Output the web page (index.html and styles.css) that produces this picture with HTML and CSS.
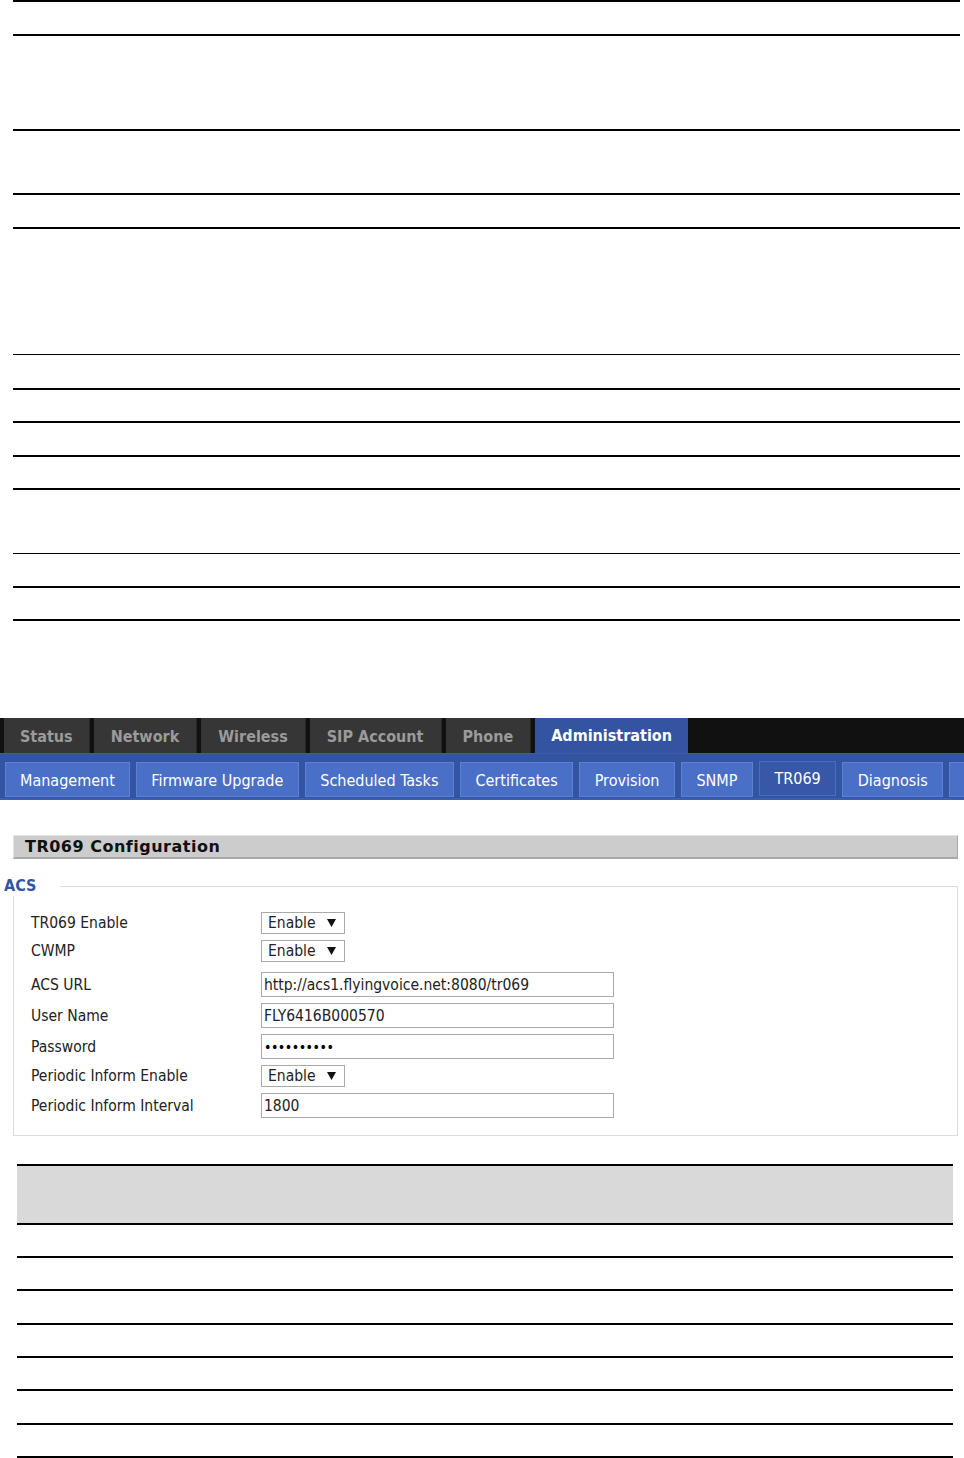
FILE: index.html
```html
<!DOCTYPE html>
<html lang="en">
<head>
    <meta charset="UTF-8">
    <title>TR069 Configuration</title>
    <link rel="stylesheet" href="styles.css">
</head>
<body>
    <!-- 文档表格（上） -->
    <div class="doc-table top">
        <div class="row first h32"></div>
        <div class="row h93"></div>
        <div class="row h62"></div>
        <div class="row h32"></div>
        <div class="row h125 thin"></div>
        <div class="row h33"></div>
        <div class="row h31"></div>
        <div class="row h32"></div>
        <div class="row h31"></div>
        <div class="row h63 thin"></div>
        <div class="row h32"></div>
        <div class="row h31"></div>
    </div>

    <!-- 设备界面截图 -->
    <div class="shot">
        <div class="nav">
            <div class="nav-tab">Status</div>
            <div class="nav-tab">Network</div>
            <div class="nav-tab">Wireless</div>
            <div class="nav-tab">SIP Account</div>
            <div class="nav-tab">Phone</div>
            <div class="nav-tab active">Administration</div>
        </div>
        <div class="subnav">
            <div class="sub-tab">Management</div>
            <div class="sub-tab">Firmware Upgrade</div>
            <div class="sub-tab">Scheduled Tasks</div>
            <div class="sub-tab">Certificates</div>
            <div class="sub-tab">Provision</div>
            <div class="sub-tab">SNMP</div>
            <div class="sub-tab active">TR069</div>
            <div class="sub-tab">Diagnosis</div>
            <div class="sub-tab more"></div>
        </div>

        <div class="panel-title">TR069 Configuration</div>

        <fieldset class="group">
            <legend>ACS</legend>
            <div class="form-row">
                <label>TR069 Enable</label>
                <span class="select">Enable<svg class="caret" width="9" height="8" viewBox="0 0 9 8"><polygon points="0,0 9,0 4.5,8"/></svg></span>
            </div>
            <div class="form-row">
                <label>CWMP</label>
                <span class="select">Enable<svg class="caret" width="9" height="8" viewBox="0 0 9 8"><polygon points="0,0 9,0 4.5,8"/></svg></span>
            </div>
            <div class="form-row tall gap">
                <label>ACS URL</label>
                <input type="text" value="http://acs1.flyingvoice.net:8080/tr069">
            </div>
            <div class="form-row tall">
                <label>User Name</label>
                <input type="text" value="FLY6416B000570">
            </div>
            <div class="form-row tall">
                <label>Password</label>
                <input type="password" value="acspasswrd">
            </div>
            <div class="form-row">
                <label>Periodic Inform Enable</label>
                <span class="select">Enable<svg class="caret" width="9" height="8" viewBox="0 0 9 8"><polygon points="0,0 9,0 4.5,8"/></svg></span>
            </div>
            <div class="form-row tall">
                <label>Periodic Inform Interval</label>
                <input type="text" value="1800">
            </div>
        </fieldset>
    </div>

    <!-- 文档表格（下） -->
    <div class="doc-table bottom">
        <div class="row first head"></div>
        <div class="row h31"></div>
        <div class="row h31"></div>
        <div class="row h32"></div>
        <div class="row h31"></div>
        <div class="row h31"></div>
        <div class="row h32"></div>
        <div class="row h31"></div>
    </div>
</body>
</html>
```

FILE: styles.css
```css
* {
    margin: 0;
    padding: 0;
    box-sizing: border-box;
}

body {
    font-family: "DejaVu Sans Condensed", "DejaVu Sans", sans-serif;
    font-stretch: condensed;
    background: white;
    width: 964px;
    overflow: hidden;
}

/* 文档表格 */
.doc-table .row {
    border-bottom: 2px solid #000;
}

.doc-table .row.first {
    border-top: 2px solid #000;
}

.doc-table .row.thin {
    border-bottom-width: 1px;
}

.doc-table.top {
    margin-left: 13px;
    width: 947px;
}

.doc-table.bottom {
    margin: 28px 0 0 17px;
    width: 936px;
}

.doc-table .head {
    height: 59px;
    background: #d9d9d9;
}

.h31 { height: 33px; }
.h32 { height: 34px; }
.h33 { height: 35px; }
.h62 { height: 64px; }
.h63 { height: 64px; }
.h93 { height: 95px; }
.h125 { height: 126px; }

.doc-table .row.first.h32 { height: 36px; }
.doc-table .row.first.head { height: 61px; }

/* 截图区域 */
.shot {
    margin-top: 97px;
}

.nav {
    display: flex;
    height: 35px;
    background: #111;
    padding-left: 4px;
}

.nav-tab {
    padding: 3px 17px 0;
    margin-right: 4px;
    line-height: 32px;
    background: #363636;
    border-right: 1px solid #262626;
    color: #9b9b9b;
    font-size: 16px;
    font-weight: bold;
    white-space: nowrap;
}

.nav-tab:first-child {
    padding: 3px 16px 0;
}

.nav-tab.active {
    background: #3354a1;
    border-right: none;
    color: white;
    padding: 1px 16px 0;
    line-height: 33px;
}

.subnav {
    display: flex;
    height: 47px;
    background: #3354a1;
    border-top: 1px solid #3a5cab;
    border-bottom: 2px solid #3c5eb0;
    padding: 8px 0 0 5px;
    gap: 6px;
    overflow: hidden;
}

.sub-tab {
    height: 35px;
    padding: 2px 14.5px 0;
    line-height: 31px;
    background: #4a6fc7;
    border: 1px solid #5b80d6;
    color: white;
    font-size: 16px;
    white-space: nowrap;
    flex-shrink: 0;
}

.sub-tab:first-child {
    padding: 2px 14px 0;
}

.sub-tab.active {
    background: #3758a8;
    border-color: #4a6dc0;
    margin-top: -1px;
    padding-top: 1px;
}

.sub-tab.more {
    width: 40px;
}

.panel-title {
    margin: 35px 6px 0 13px;
    height: 24px;
    line-height: 22px;
    padding-left: 11px;
    background: #cccccc;
    border: 1px solid #e4e4e4;
    border-right-color: #a8a8a8;
    border-bottom: 2px solid #a8a8a8;
    font-family: "DejaVu Sans", sans-serif;
    font-stretch: normal;
    font-size: 16px;
    font-weight: bold;
    letter-spacing: 0.5px;
    color: #111;
}

.group {
    margin: 17px 6px 0 13px;
    border: 1px solid #dcdcdc;
    padding: 13px 0 14px 17px;
}

.group legend {
    margin-left: -27px;
    padding-right: 24px;
    line-height: 20px;
    font-size: 16px;
    font-weight: bold;
    color: #3355a3;
}

.form-row {
    display: flex;
    align-items: center;
    height: 28px;
}

.form-row.tall {
    height: 31px;
}

.form-row.gap {
    margin-top: 4px;
}

.form-row label {
    width: 230px;
    font-size: 15.5px;
    color: #222;
}

.select {
    display: flex;
    align-items: center;
    justify-content: space-between;
    width: 84px;
    height: 22px;
    padding: 0 8px 0 6px;
    border: 1px solid #a9a9a9;
    background: white;
    font-size: 15.5px;
    color: #222;
}

.caret {
    fill: #111;
}

.form-row input {
    width: 353px;
    height: 25px;
    padding: 0 2px;
    border: 1px solid #a9a9a9;
    font-family: "DejaVu Sans Condensed", "DejaVu Sans", sans-serif;
    font-stretch: condensed;
    font-size: 15.5px;
    color: #222;
    outline: none;
}

.form-row input[type="password"] {
    font-size: 14px;
    letter-spacing: -0.5px;
    color: #000;
}
```
